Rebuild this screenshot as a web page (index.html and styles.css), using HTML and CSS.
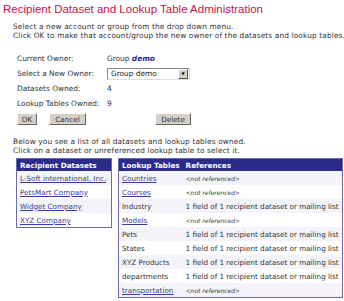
FILE: index.html
```html
<!DOCTYPE html>
<html lang="en">
<head>
    <meta charset="UTF-8">
    <title>Recipient Dataset and Lookup Table Administration</title>
    <link rel="stylesheet" href="styles.css">
</head>
<body>
    <h1 class="title">Recipient Dataset and Lookup Table Administration</h1>

    <p class="intro">
        Select a new account or group from the drop down menu.<br>
        Click OK to make that account/group the new owner of the datasets and lookup tables.
    </p>

    <div class="owner-form">
        <div class="row">
            <span class="label">Current Owner:</span>
            <span>Group <b class="owner">demo</b></span>
        </div>
        <div class="row">
            <span class="label">Select a New Owner:</span>
            <span class="select">
                <span class="select-text">Group demo</span>
                <span class="select-arrow">&#9660;</span>
            </span>
        </div>
        <div class="row">
            <span class="label">Datasets Owned:</span>
            <span>4</span>
        </div>
        <div class="row">
            <span class="label">Lookup Tables Owned:</span>
            <span>9</span>
        </div>
        <div class="buttons">
            <button class="btn btn-ok">OK</button>
            <button class="btn btn-cancel">Cancel</button>
            <button class="btn btn-delete">Delete</button>
        </div>
    </div>

    <p class="intro intro-list">
        Below you see a list of all datasets and lookup tables owned.<br>
        Click on a dataset or unreferenced lookup table to select it.
    </p>

    <div class="lists">
        <table class="grid grid-datasets">
            <tr><th>Recipient Datasets</th></tr>
            <tr><td><a href="#">L-Soft international, Inc.</a></td></tr>
            <tr><td><a href="#">PetsMart Company</a></td></tr>
            <tr><td><a href="#">Widget Company</a></td></tr>
            <tr><td><a href="#">XYZ Company</a></td></tr>
        </table>

        <table class="grid grid-lookups">
            <tr><th class="col-name">Lookup Tables</th><th>References</th></tr>
            <tr><td><a href="#">Countries</a></td><td class="none">&lt;not referenced&gt;</td></tr>
            <tr><td><a href="#">Courses</a></td><td class="none">&lt;not referenced&gt;</td></tr>
            <tr><td>Industry</td><td>1 field of 1 recipient dataset or mailing list</td></tr>
            <tr><td><a href="#">Models</a></td><td class="none">&lt;not referenced&gt;</td></tr>
            <tr><td>Pets</td><td>1 field of 1 recipient dataset or mailing list</td></tr>
            <tr><td>States</td><td>1 field of 1 recipient dataset or mailing list</td></tr>
            <tr><td>XYZ Products</td><td>1 field of 1 recipient dataset or mailing list</td></tr>
            <tr><td>departments</td><td>1 field of 1 recipient dataset or mailing list</td></tr>
            <tr><td><a href="#">transportation</a></td><td class="none">&lt;not referenced&gt;</td></tr>
        </table>
    </div>
</body>
</html>
```

FILE: styles.css
```css
body {
  margin: 0;
  font-family: "DejaVu Sans", Verdana, sans-serif;
  font-size: 7.4px;
  color: #333;
  background: #fff;
}

.title {
  margin: 2px 0 0 3px;
  font-family: "Liberation Sans", Arial, sans-serif;
  font-size: 11.5px;
  font-weight: normal;
  color: #c8104a;
  line-height: 14px;
}

.intro {
  margin: 6px 0 0 13px;
  line-height: 9px;
  letter-spacing: 0.12px;
  white-space: nowrap;
}

.owner-form {
  margin: 11px 0 0 17px;
  width: 174px;
}

.row {
  display: flex;
  align-items: center;
  height: 15px;
}

.label {
  width: 90px;
  white-space: nowrap;
}

.owner {
  color: #2a2a88;
  font-style: italic;
}

.select {
  display: flex;
  align-items: center;
  width: 83px;
  height: 12px;
  border: 1px solid;
  border-color: #888 #ddd #ddd #888;
  background: #fff;
  box-sizing: border-box;
}

.select-text {
  flex: 1;
  padding-left: 3px;
  color: #222;
}

.select-arrow {
  width: 8px;
  height: 8px;
  margin-right: 1px;
  font-size: 4px;
  line-height: 8px;
  text-align: center;
  background: #d4d0c8;
  border: 1px solid;
  border-color: #fff #555 #555 #fff;
  color: #000;
}

.buttons {
  display: flex;
  margin-top: 2px;
}

.btn {
  height: 12px;
  padding: 0;
  font-family: inherit;
  font-size: 7.2px;
  color: #333;
  background: #d4d0c8;
  border: 1px solid;
  border-color: #fff #666 #666 #fff;
}

.btn-ok { width: 20px; }
.btn-cancel { width: 37px; margin-left: 12px; }
.btn-delete { width: 36px; margin-left: auto; }

.intro-list {
  margin-top: 12px;
}

.lists {
  display: flex;
  align-items: flex-start;
  gap: 6px;
  margin: 3px 0 0 16px;
}

.grid {
  border-collapse: collapse;
  border: 1px solid #6b6bb0;
  font-size: 7.2px;
}

.grid th {
  background: #2b2b8a;
  color: #fff;
  font-weight: bold;
  text-align: left;
  height: 12px;
  padding: 0 3px;
  white-space: nowrap;
}

.grid td {
  height: 14px;
  padding: 0 3px;
  white-space: nowrap;
}

.grid tr:nth-child(even) td {
  background: #f3f4f9;
}

.grid a {
  color: #3a3a9a;
}

.grid-datasets {
  width: 96px;
}

.grid-lookups {
  width: 222px;
}

.col-name {
  width: 58px;
}

.none {
  font-style: italic;
  font-size: 6px;
}
```
